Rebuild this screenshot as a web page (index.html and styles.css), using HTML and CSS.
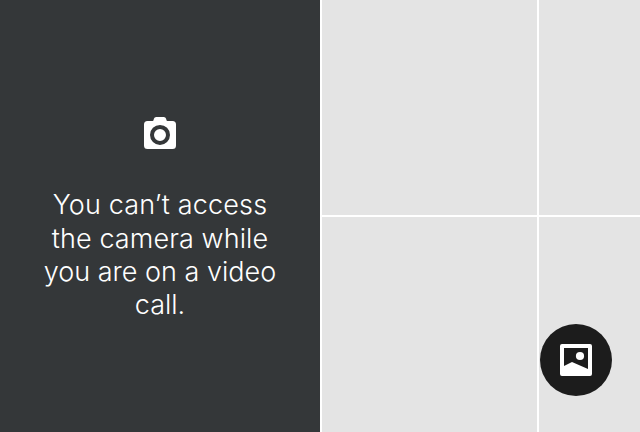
FILE: index.html
```html
<!DOCTYPE html>
<html lang="en">
<head>
<meta charset="utf-8">
<title>Media picker</title>
<link rel="stylesheet" href="styles.css">
</head>
<body>
<main class="picker">
  <section class="camera">
    <svg class="camera-icon" viewBox="0 0 32 32" aria-hidden="true">
      <path fill="#fff" fill-rule="evenodd" d="M3.500 4H8.600Q9.300 4 9.500 3.200L9.900 1.800Q10.400 0 12.200 0H19.800Q21.600 0 22.100 1.800L22.500 3.200Q22.700 4 23.400 4H28.500Q32 4 32 7.500V28.500Q32 32 28.500 32H3.500Q0 32 0 28.500V7.500Q0 4 3.500 4ZM16 7.900A10 10 0 1 0 16 27.900A10 10 0 1 0 16 7.900ZM16 11.900A6 6 0 1 1 16 23.900A6 6 0 1 1 16 11.900Z"/>
    </svg>
    <p class="message">
      <span class="line first">You can’t access</span>
      <span class="line second">the camera while</span>
      <span class="line">you are on a video</span>
      <span class="line">call.</span>
    </p>
  </section>
  <section class="gallery">
    <div class="tile"></div><div class="tile"></div>
    <div class="tile"></div><div class="tile"></div>
  </section>
  <button class="library" aria-label="Photo library">
    <svg class="library-icon" viewBox="0 0 32 32" aria-hidden="true">
      <path fill="#fff" fill-rule="evenodd" d="M2 0H30Q32 0 32 2V30Q32 32 30 32H2Q0 32 0 30V2Q0 0 2 0ZM4 4V22L12 18L28 25V4Z"/>
      <circle cx="20" cy="12" r="4.100" fill="#fff"/>
    </svg>
  </button>
</main>
</body>
</html>
```
FILE: styles.css
```css
body { margin: 0; }
.picker {
  position: relative;
  display: grid;
  grid-template-columns: 320px 1fr;
  gap: 2px;
  width: 640px;
  height: 432px;
  overflow: hidden;
  background: #fff;
}
.camera {
  display: flex;
  flex-direction: column;
  align-items: center;
  background: #343739;
}
.camera-icon {
  width: 32px;
  height: 32px;
  margin-top: 117px;
}
.message {
  margin: 39px 0 0;
  color: #fff;
  font: 300 27px/33px Inter, sans-serif;
  text-align: center;
  white-space: nowrap;
}
.line { display: block; }
.first { letter-spacing: 0.16px; line-height: 34px; }
.second { margin-bottom: -1px; letter-spacing: 0.09px; line-height: 34px; }
.gallery {
  display: grid;
  grid-template-columns: 215px 1fr;
  grid-template-rows: 215px 215px;
  gap: 2px;
}
.tile { background: #e4e4e4; }
.library {
  position: absolute;
  left: 540px;
  top: 324px;
  display: flex;
  align-items: center;
  justify-content: center;
  width: 72px;
  height: 72px;
  padding: 0;
  border: 0;
  border-radius: 50%;
  background: #1c1c1c;
}
.library-icon { width: 32px; height: 32px; }
```
